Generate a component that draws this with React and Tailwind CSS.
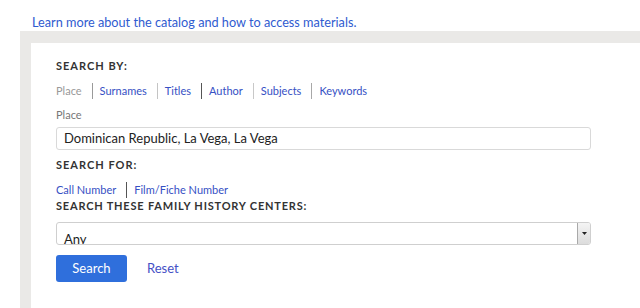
import React from "react";

const font = { fontFamily: "Lato, 'Open Sans', Arial, sans-serif" };

function Sep({ c }) {
  return <span className={"inline-block w-px h-[16px] ml-[10px] mr-[7px] " + c} />;
}

export default function App() {
  const tabs = [
    ["Surnames", "bg-[#9a9a9a]"],
    ["Titles", "bg-[#c4c4c4]"],
    ["Author", "bg-[#555555]"],
    ["Subjects", "bg-[#c8c8c8]"],
    ["Keywords", "bg-[#a8a8a8]"],
  ];
  return (
    <div className="w-[640px] h-[308px] overflow-hidden bg-white" style={font}>
      <div className="pl-[32px] pt-[14px] h-[31px] text-[12.7px] leading-[16px] text-[#2f5bd0]">
        Learn more about the catalog and how to access materials.
      </div>
      <div className="ml-[20px] bg-[#eae9e7] pt-[12px] pl-[11px] h-[277px]">
        <div className="bg-white h-full pl-[25px] pt-[16px]">
          <div className="text-[11px] leading-[14px] font-bold tracking-[1px] text-[#333]">SEARCH BY:</div>
          <div className="mt-[10px] flex items-center text-[11px] leading-[16px]">
            <span className="text-[#999]">Place</span>
            {tabs.map(([t, c]) => (
              <React.Fragment key={t}>
                <Sep c={c} />
                <span className="text-[#3650c4]">{t}</span>
              </React.Fragment>
            ))}
          </div>
          <div className="mt-[8px] text-[11px] leading-[16px] text-[#777]">Place</div>
          <div className="mt-[4px] w-[535px] h-[23px] border border-[#d9d9d9] rounded-[3px] pl-[7px] flex items-center text-[13px] text-[#222]">
            Dominican Republic, La Vega, La Vega
          </div>
          <div className="mt-[8px] text-[11px] leading-[14px] font-bold tracking-[1px] text-[#333]">SEARCH FOR:</div>
          <div className="mt-[10px] flex items-center text-[11px] leading-[16px]">
            <span className="text-[#3650c4]">Call Number</span>
            <Sep c="bg-[#555555]" />
            <span className="text-[#3650c4]">Film/Fiche Number</span>
          </div>
          <div className="mt-[1px] text-[11px] leading-[14px] font-bold tracking-[0.8px] text-[#333]">
            SEARCH THESE FAMILY HISTORY CENTERS:
          </div>
          <div className="mt-[9px] w-[535px] h-[23px] border border-[#cfcfcf] rounded-[3px] flex overflow-hidden">
            <div className="flex-1 pl-[7px] pt-[8px] text-[13px] leading-[16px] text-[#222] overflow-hidden">Any</div>
            <div className="w-[13px] h-full border-l border-[#a9a9a9] bg-gradient-to-b from-[#f4f4f4] to-[#dcdcdc] flex items-center justify-center">
              <svg width="5" height="4" viewBox="0 0 5 4">
                <path d="M0 0H5L2.5 3Z" fill="#222" />
              </svg>
            </div>
          </div>
          <div className="mt-[10px] flex items-center">
            <div className="w-[71px] h-[27px] rounded-[3px] bg-[#2f6fdc] text-white text-[13px] flex items-center justify-center">
              Search
            </div>
            <span className="ml-[20px] text-[13px] text-[#4551c6]">Reset</span>
          </div>
        </div>
      </div>
    </div>
  );
}
